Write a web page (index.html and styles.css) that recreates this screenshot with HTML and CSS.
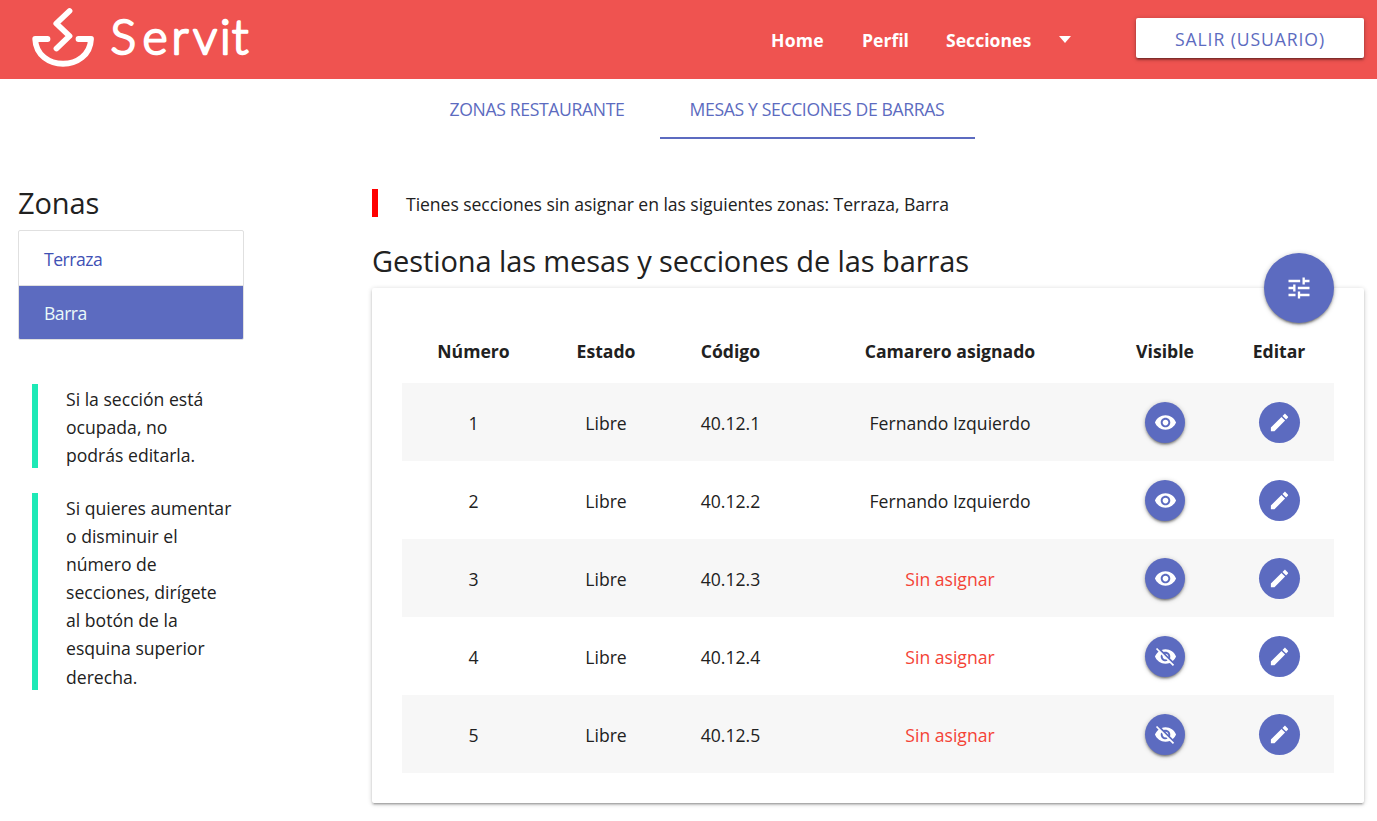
FILE: index.html
```
<!DOCTYPE html>
<html lang="es">
<head>
<meta charset="utf-8">
<title>Servit</title>
<link rel="stylesheet" href="styles.css">
</head>
<body>
<svg class="sprite" aria-hidden="true">
  <symbol id="eye" viewBox="0 0 24 24"><path d="M12 4.500C7 4.500 2.730 7.610 1 12c1.730 4.390 6 7.500 11 7.500s9.270-3.110 11-7.500c-1.730-4.390-6-7.500-11-7.500zM12 17c-2.760 0-5-2.240-5-5s2.240-5 5-5 5 2.240 5 5-2.240 5-5 5zm0-8c-1.660 0-3 1.340-3 3s1.340 3 3 3 3-1.340 3-3-1.340-3-3-3z"/></symbol>
  <symbol id="eye-off" viewBox="0 0 24 24"><path d="M12 7c2.760 0 5 2.240 5 5 0 .65-.13 1.260-.36 1.830l2.920 2.920c1.510-1.260 2.700-2.890 3.430-4.750-1.730-4.390-6-7.500-11-7.500-1.400 0-2.740.25-3.980.7l2.160 2.160C10.740 7.130 11.350 7 12 7zM2 4.270l2.280 2.280.46.46C3.080 8.300 1.780 10.020 1 12c1.730 4.390 6 7.500 11 7.500 1.550 0 3.030-.3 4.380-.84l.42.42L19.730 22 21 20.730 3.270 3 2 4.270zM7.530 9.800l1.550 1.550c-.05.21-.08.43-.08.65 0 1.660 1.340 3 3 3 .22 0 .44-.03.65-.08l1.550 1.550c-.67.33-1.410.53-2.200.53-2.760 0-5-2.240-5-5 0-.79.2-1.530.53-2.200zm4.310-.78l3.150 3.150.02-.16c0-1.660-1.340-3-3-3l-.17.01z"/></symbol>
  <symbol id="pencil" viewBox="0 0 24 24"><path d="M3 17.250V21h3.750L17.810 9.940l-3.750-3.750L3 17.250zM20.710 7.040c.39-.39.39-1.020 0-1.410l-2.340-2.340c-.39-.39-1.020-.39-1.410 0l-1.830 1.830 3.750 3.750 1.830-1.830z"/></symbol>
  <symbol id="tune" viewBox="0 0 24 24"><path d="M3 17v2h6v-2H3zM3 5v2h10V5H3zm10 16v-2h8v-2h-8v-2h-2v6h2zM7 9v2H3v2h4v2h2V9H7zm14 4v-2H11v2h10zm-6-4h2V7h4V5h-4V3h-2v6z"/></symbol>
</svg>
<header class="navbar">
  <svg class="logo" width="230" height="70" viewBox="0 0 230 70">
    <path class="logo-mark" d="M39.500 11 26.300 23.500 39.500 36 26.500 48.500" />
    <path class="logo-mark" d="M17.500 39H5.200C6.500 72 59.500 72 61 39H48.500" />
    <text class="logo-text" x="80.500 112.500 141.500 163 190 202" y="54">Servit</text>
  </svg>
  <nav class="nav">
    <a class="home">Home</a><a class="perfil">Perfil</a><a class="secciones">Secciones</a><i class="caret"></i>
    <button class="logout"><span>SALIR (USUARIO)</span></button>
  </nav>
</header>
<div class="tabs"><a class="tab">ZONAS RESTAURANTE</a><a class="tab active">MESAS Y SECCIONES DE BARRAS</a></div>
<div class="layout">
  <aside class="side">
    <h2 class="side-title">Zonas</h2>
    <div class="collection"><a class="item">Terraza</a><a class="item selected">Barra</a></div>
    <blockquote class="quote short">Si la sección está<br>ocupada, no<br>podrás editarla.</blockquote>
    <blockquote class="quote long">Si quieres aumentar<br>o disminuir el<br>número de<br>secciones, dirígete<br>al botón de la<br>esquina superior<br>derecha.</blockquote>
  </aside>
  <main class="main">
    <blockquote class="quote alert">Tienes secciones sin asignar en las siguientes zonas: Terraza, Barra</blockquote>
    <h2 class="main-title">Gestiona las mesas y secciones de las barras</h2>
    <section class="card">
      <button class="tune"><svg width="28" height="28"><use href="#tune"/></svg></button>
      <table class="table">
        <colgroup><col class="c1"><col class="c2"><col class="c3"><col class="c4"><col class="c5"><col class="c6"></colgroup>
        <thead><tr><th>Número</th><th>Estado</th><th>Código</th><th>Camarero asignado</th><th>Visible</th><th>Editar</th></tr></thead>
        <tbody>
          <tr><td>1</td><td>Libre</td><td>40.12.1</td><td>Fernando Izquierdo</td><td><button class="round raised"><svg><use href="#eye"/></svg></button></td><td><button class="round"><svg><use href="#pencil"/></svg></button></td></tr>
          <tr><td>2</td><td>Libre</td><td>40.12.2</td><td>Fernando Izquierdo</td><td><button class="round raised"><svg><use href="#eye"/></svg></button></td><td><button class="round"><svg><use href="#pencil"/></svg></button></td></tr>
          <tr><td>3</td><td>Libre</td><td>40.12.3</td><td class="none">Sin asignar</td><td><button class="round raised"><svg><use href="#eye"/></svg></button></td><td><button class="round"><svg><use href="#pencil"/></svg></button></td></tr>
          <tr><td>4</td><td>Libre</td><td>40.12.4</td><td class="none">Sin asignar</td><td><button class="round raised"><svg><use href="#eye-off"/></svg></button></td><td><button class="round"><svg><use href="#pencil"/></svg></button></td></tr>
          <tr><td>5</td><td>Libre</td><td>40.12.5</td><td class="none">Sin asignar</td><td><button class="round raised"><svg><use href="#eye-off"/></svg></button></td><td><button class="round"><svg><use href="#pencil"/></svg></button></td></tr>
        </tbody>
      </table>
    </section>
  </main>
</div>
</body>
</html>
```
FILE: styles.css
```
* { box-sizing: border-box; }
body { margin: 0; height: 821px; overflow: hidden; background: #fff; color: #212121; font: 17.6px/28px "Open Sans", "Noto Sans", sans-serif; white-space: nowrap; }
button { border: 0; padding: 0; font: inherit; }
h2, blockquote { margin: 0; font-weight: 400; }
.sprite { display: none; }
.navbar { height: 79px; background: #ef5350; display: flex; justify-content: space-between; padding: 0 13px 0 30px; }
.logo { display: block; flex: none; }
.logo-mark { fill: none; stroke: #fff; stroke-width: 5.8; stroke-linecap: round; stroke-linejoin: round; }
.logo-text { font-family: Lato, sans-serif; font-size: 48px; font-weight: 300; fill: #fff; stroke: #fff; stroke-width: 2.4; stroke-linejoin: round; }
.nav { display: flex; align-items: center; color: #fff; font-weight: 700; }
.home { width: 91px; letter-spacing: .2px; }
.perfil { width: 84px; }
.secciones { width: 113px; }
.caret { width: 12px; margin-right: 65px; border: 6px solid transparent; border-top: 7px solid #fff; border-bottom: 0; }
.logout { width: 228px; height: 40px; margin-bottom: 3px; border-radius: 2px; background: #fff; color: #5c6bc0; font-weight: 400; letter-spacing: .9px; padding-top: 2px; box-shadow: 0 2px 2px rgba(0,0,0,.24), 0 3px 1px -2px rgba(0,0,0,.18), 0 1px 5px rgba(0,0,0,.25); }
.tabs { height: 60px; display: flex; justify-content: center; padding-left: 12px; }
.tab { height: 60px; line-height: 61px; width: 245px; text-align: center; color: #5c6bc0; letter-spacing: -.36px; }
.tab.active { width: 315px; border-bottom: 2px solid #5c6bc0; }
.layout { display: flex; padding: 50px 13px 0 18px; }
.side { width: 226px; flex: none; }
.side-title { font-size: 29px; line-height: 28px; height: 41px; letter-spacing: -.1px; }
.collection { border: 1px solid #e0e0e0; border-radius: 2px; overflow: hidden; margin-bottom: 44px; }
.item { display: block; height: 55px; padding: 1px 25px; line-height: 54px; color: #3f51b5; border-bottom: 1px solid #e0e0e0; letter-spacing: -.5px; }
.item.selected { height: 53px; padding-top: 0; background: #5c6bc0; color: #eafaf9; border-bottom: 0; }
.quote { border-left: 6px solid #1de9b6; padding: 1px 0 0 28px; margin: 0 0 25px 14px; line-height: 28.1px; }
.short { height: 84px; }
.long { height: 197px; }
.main { width: 992px; margin-left: 128px; }
.alert { margin: 0; padding-top: 0; border-color: #f00; height: 28px; line-height: 30px; letter-spacing: -.06px; }
.main-title { font-size: 29px; line-height: 40px; height: 71px; padding-top: 24px; letter-spacing: -.09px; }
.card { position: relative; width: 992px; height: 515px; padding: 30px; border-radius: 2px; background: #fff; box-shadow: 0 2px 2px rgba(0,0,0,.14), 0 3px 1px -2px rgba(0,0,0,.12), 0 1px 5px rgba(0,0,0,.2); }
.tune { position: absolute; right: 30px; top: -35px; width: 70px; height: 70px; border-radius: 50%; background: #5c6bc0; fill: #fff; display: grid; place-items: center; box-shadow: 0 2px 2px rgba(0,0,0,.24), 0 3px 1px -2px rgba(0,0,0,.18), 0 1px 5px rgba(0,0,0,.25); }
.table { width: 932px; table-layout: fixed; border-collapse: collapse; text-align: center; }
.c1 { width: 143px; } .c2 { width: 122px; } .c3 { width: 127px; } .c4 { width: 312px; } .c5 { width: 118px; } .c6 { width: 110px; }
th { height: 65px; padding: 0; font-weight: 700; }
td { height: 78px; padding: 1px 0 0; }
tbody tr:nth-child(odd) { background: #f7f7f7; }
.none { color: #f44336; }
.round { display: grid; place-items: center; width: 41px; height: 41px; margin: 0 auto; border-radius: 50%; background: #5c6bc0; fill: #fff; }
.round svg { width: 23px; height: 23px; }
.raised { width: 40px; box-shadow: 0 2px 2px rgba(0,0,0,.24), 0 3px 1px -2px rgba(0,0,0,.18), 0 1px 5px rgba(0,0,0,.25); }
```
